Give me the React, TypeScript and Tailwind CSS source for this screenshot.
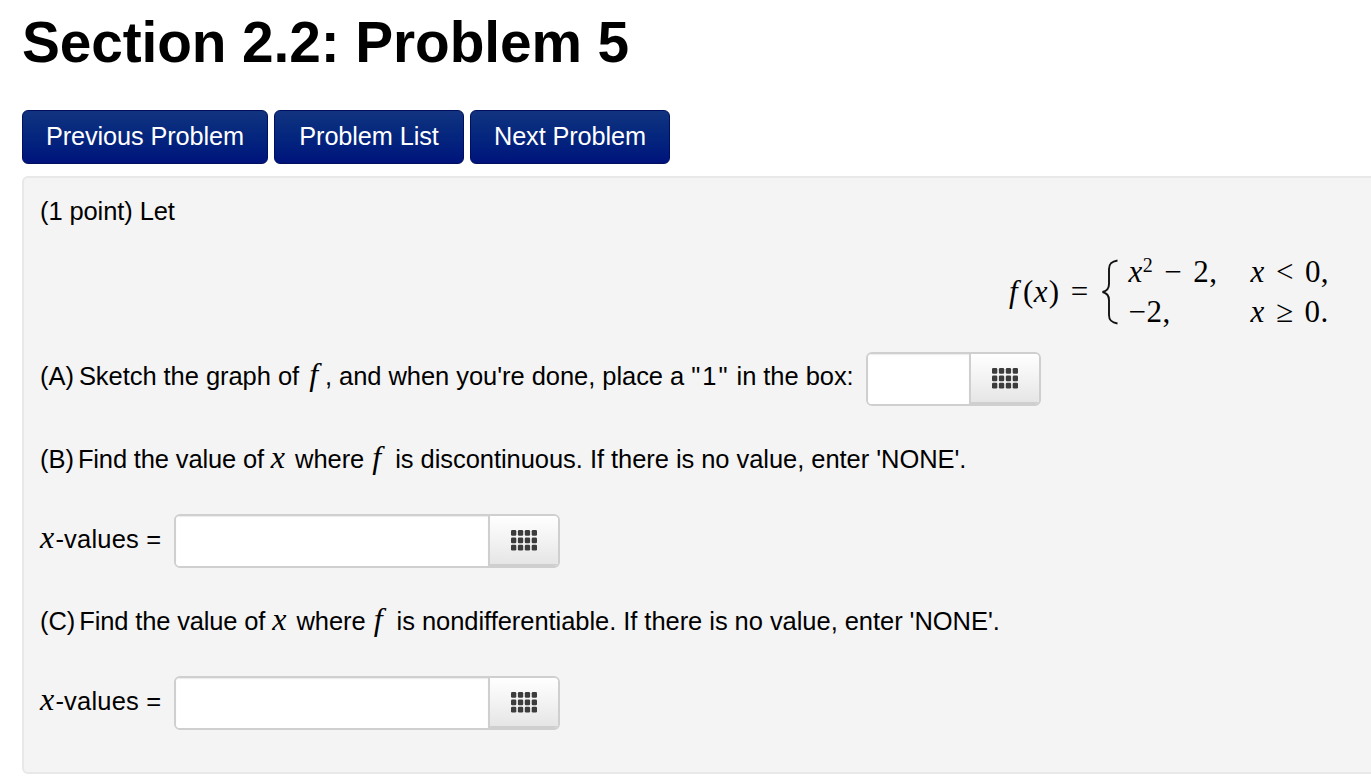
const serif = "font-['Liberation_Serif',serif]";

function Grid() {
  return (
    <svg width="26" height="21" viewBox="0 0 26 21" fill="#3c3c3c">
      {[0, 7.4, 14.8].map((y) =>
        [0, 6.9, 13.8, 20.7].map((x) => <rect key={`${x}-${y}`} x={x} y={y} width="5.3" height="5.8" rx="1.3" />)
      )}
    </svg>
  );
}

function MathInput({ width }: { width: string }) {
  return (
    <span className="inline-flex h-[54px] overflow-hidden rounded-[6px] border-2 border-[#cfcfcf] bg-white">
      <span className={`block h-full bg-white shadow-[inset_0_1px_1px_rgba(0,0,0,0.08)] ${width}`} />
      <span className="flex w-[70px] items-center justify-center border-b-2 border-l-2 border-[#cfcfcf] bg-gradient-to-b from-[#ffffff] to-[#e6e6e6]">
        <Grid />
      </span>
    </span>
  );
}

function Problem({ tag, what }: { tag: string; what: string }) {
  return (
    <p className="h-[30px] leading-[30px] tracking-[-0.05px]">
      <span className="[word-spacing:-3px]">({tag}) </span>
      <span className="tracking-[-0.15px]">Find the value of </span>
      <span className={`${serif} mr-[3px] text-[32px] italic leading-none`}>x</span> where{" "}
      <span className={`${serif} ml-[1px] mr-[7px] text-[32px] italic leading-none`}>f</span> is {what}. If there is no
      value, enter 'NONE'.
    </p>
  );
}

function XValues() {
  return (
    <div className="flex items-center gap-[13px]">
      <span className="relative top-[-2px] tracking-[0.2px]">
        <span className={`${serif} mr-[1px] text-[32px] italic leading-none`}>x</span>-values =
      </span>
      <MathInput width="w-[312px]" />
    </div>
  );
}

function NavButton({ label, w }: { label: string; w: string }) {
  return (
    <button className={`flex h-[54px] items-center justify-center rounded-[6px] border border-[#00105e] bg-gradient-to-b from-[#11337f] to-[#00137c] text-[25.3px] text-white ${w}`}>
      {label}
    </button>
  );
}

export default function App() {
  return (
    <div className="h-[781px] w-[1371px] overflow-hidden bg-white pl-[22px] font-['Liberation_Sans',Arial,sans-serif] text-[25.5px] tracking-[-0.1px] text-black">
      <h1 className="h-[110px] pt-[10px] text-[56.8px] font-bold leading-[66px]">Section 2.2: Problem 5</h1>
      <div className="flex gap-[6px]">
        <NavButton label="Previous Problem" w="w-[246px]" />
        <NavButton label="Problem List" w="w-[190px]" />
        <NavButton label="Next Problem" w="w-[200px]" />
      </div>
      <div className="mt-[12px] h-[598px] w-[1370px] rounded-[6px] border-2 border-[#e8e8e8] bg-[#f4f4f4] pl-[16px] pt-[18px]">
        <p className="h-[30px] leading-[30px]">(1 point) Let</p>
        <div className={`${serif} mt-[30px] flex h-[72px] items-center justify-end pr-[61px] text-[31px] leading-[40px] tracking-[0.4px] [word-spacing:3px]`}>
          <span className="mr-[12px]">
            <i className="mr-[5px]">f</i>(<i className="mr-[1px]">x</i>) =
          </span>
          <svg width="18" height="66" viewBox="0 0 18 66" fill="none" stroke="#111" strokeWidth="1.9" className="mr-[10px]">
            <path d="M16.5 1.5 C10 2.5 8 5 8 10 V25 C8 30 6 32 1.5 33 C6 34 8 36 8 41 V56 C8 61 10 63.5 16.5 64.5" />
          </svg>
          <div className="grid grid-cols-[122px_auto]">
            <span>
              <i>x</i>
              <sup className="text-[20px] leading-none">2</sup> − 2,
            </span>
            <span>
              <i>x</i> &lt; 0,
            </span>
            <span>−2,</span>
            <span>
              <i>x</i> ≥ 0.
            </span>
          </div>
        </div>
        <div className="mt-[24px] flex items-center gap-[12px]">
          <span className="relative top-[-3px] tracking-[-0.05px]">
            <span className="[word-spacing:-2px]">(A) </span>Sketch the graph of{" "}
            <span className={`${serif} ml-[3px] mr-[7px] text-[32px] italic leading-none`}>f</span>, and when you're done, place a{" "}
            <span className="tracking-[2px]">"1"</span> in the box:
          </span>
          <MathInput width="w-[101px]" />
        </div>
        <div className="mt-[35px]">
          <Problem tag="B" what="discontinuous" />
        </div>
        <div className="mt-[43px]">
          <XValues />
        </div>
        <div className="mt-[35px]">
          <Problem tag="C" what="nondifferentiable" />
        </div>
        <div className="mt-[43px]">
          <XValues />
        </div>
      </div>
    </div>
  );
}
